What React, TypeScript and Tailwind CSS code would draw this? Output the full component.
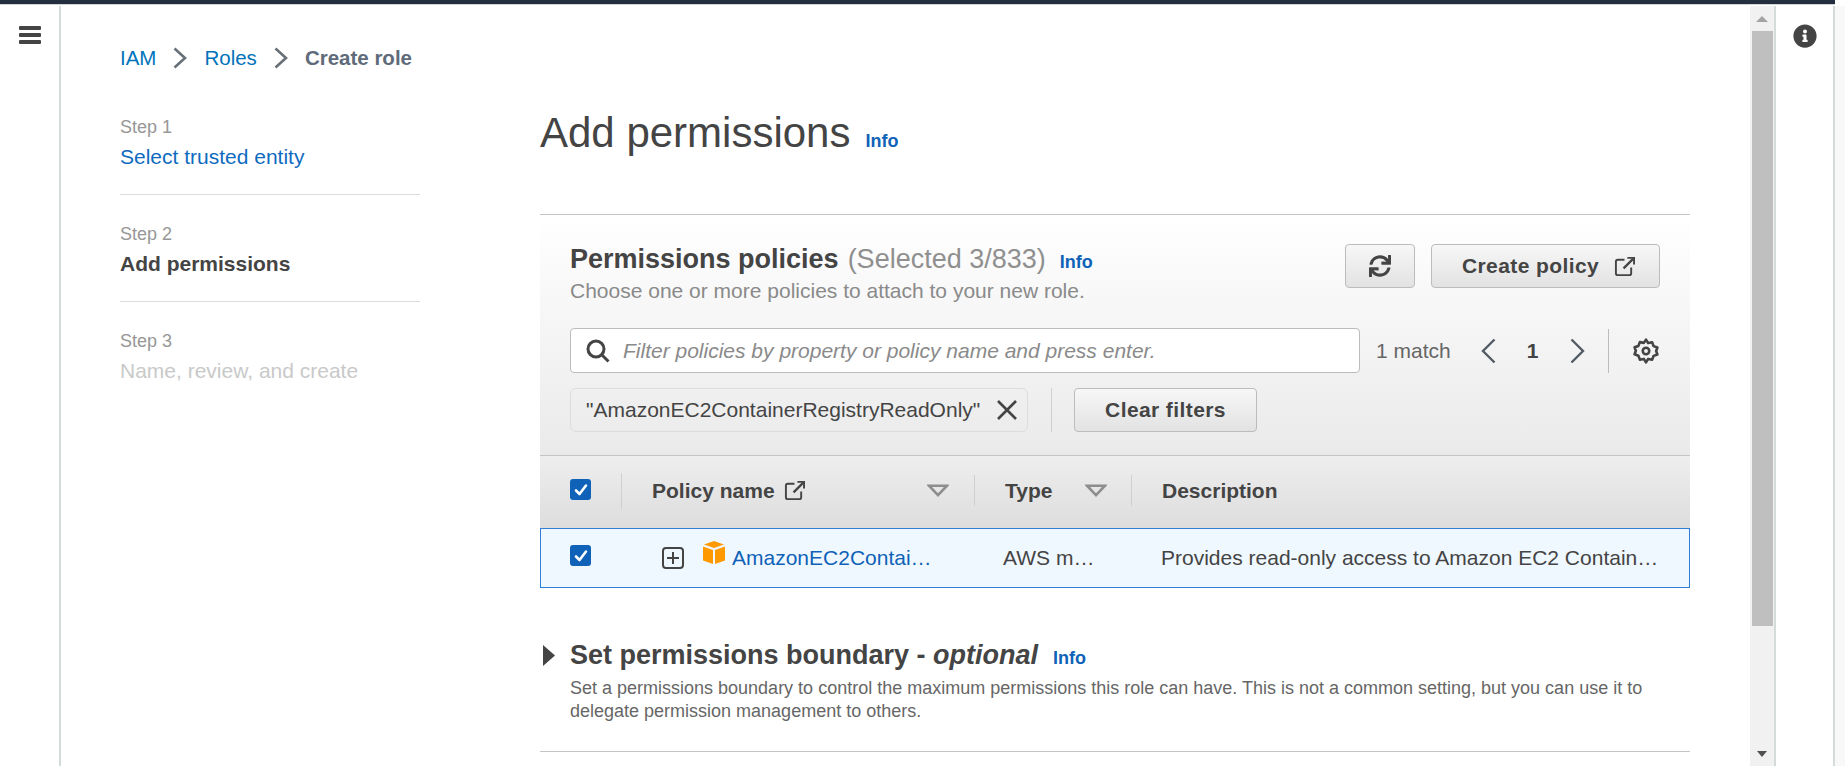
import { FaInfoCircle, FaSync } from "react-icons/fa";

const font = "font-['Liberation_Sans',Arial,sans-serif]";

function ExternalIcon({ className }: { className?: string }) {
  return (
    <svg viewBox="0 0 22 22" fill="none" stroke="currentColor" strokeWidth="2" className={className}>
      <path d="M11 4H4a2 2 0 0 0-2 2v12a2 2 0 0 0 2 2h12a2 2 0 0 0 2-2v-6" />
      <path d="M10 13 20 3" strokeWidth="2.4" />
      <path d="M14 2h7v7" />
    </svg>
  );
}

function Check({ className }: { className?: string }) {
  return (
    <span className={`flex h-[21px] w-[21px] shrink-0 items-center justify-center rounded-[3px] bg-[#0f62b8] ${className ?? ""}`}>
      <svg viewBox="0 0 16 16" className="h-[16px] w-[16px]" fill="none" stroke="#fff" strokeWidth="2.6" strokeLinecap="round" strokeLinejoin="round">
        <path d="M3 8.5 6.5 12 13 3.5" />
      </svg>
    </span>
  );
}

function SortCaret() {
  return (
    <svg viewBox="0 0 22 12" className="h-[13px] w-[22px]">
      <path d="M2 1.2h18L11 10.6z" fill="none" stroke="#8d8d8d" strokeWidth="2.6" />
    </svg>
  );
}

function Info({ className }: { className?: string }) {
  return <span className={`text-[18px] font-bold text-[#0f62b8] ${className ?? ""}`}>Info</span>;
}

function Chevron({ dir }: { dir: "left" | "right" }) {
  return (
    <svg viewBox="0 0 15 26" className="h-[26px] w-[15px]" fill="none" stroke="#545b64" strokeWidth="2.4">
      <path d={dir === "left" ? "M13.5 1.5 2 13l11.5 11.5" : "M1.5 1.5 13 13 1.5 24.5"} />
    </svg>
  );
}

function BreadcrumbSep() {
  return (
    <svg viewBox="0 0 14 22" className="h-[22px] w-[14px]" fill="none" stroke="#687078" strokeWidth="2.6">
      <path d="M1.5 1.5 12 11 1.5 20.5" />
    </svg>
  );
}

function Btn({ children, className }: { children: React.ReactNode; className?: string }) {
  return (
    <div className={`flex h-[44px] items-center justify-center rounded-[4px] border border-[#bcbcbc] bg-linear-to-b from-[#f7f7f7] to-[#e2e2e2] text-[#444] ${className ?? ""}`}>
      {children}
    </div>
  );
}

function Step({ label, name, nameClass, border }: { label: string; name: string; nameClass: string; border?: boolean }) {
  return (
    <div className={`h-[107px] pt-[27px] ${border ? "border-b border-[#dcdcdc]" : ""}`}>
      <div className="text-[18px] leading-[24px] text-[#979797]">{label}</div>
      <div className={`mt-[3px] text-[21px] leading-[30px] ${nameClass}`}>{name}</div>
    </div>
  );
}

function Table() {
  return (
    <>
      <div className="flex h-[73px] items-center border-t border-[#c4c4c4] bg-linear-to-b from-[#eeeeee] to-[#dddddd] pb-[3px] text-[21px] font-bold text-[#444]">
        <div className="flex w-[81px] items-center pl-[30px]">
          <Check className="-mt-[2px]" />
          <span className="ml-[30px] h-[36px] border-l border-[#cfcfcf]" />
        </div>
        <div className="flex w-[354px] items-center justify-between border-r border-[#cfcfcf] pl-[31px] pr-[25px]">
          <div className="flex items-center gap-[9px]">
            <span>Policy name</span>
            <ExternalIcon className="h-[21px] w-[21px]" />
          </div>
          <SortCaret />
        </div>
        <div className="flex w-[157px] items-center justify-between border-r border-[#cfcfcf] pl-[30px] pr-[24px]">
          <span>Type</span>
          <SortCaret />
        </div>
        <div className="pl-[30px]">Description</div>
      </div>
      <div className="flex h-[60px] items-center border border-[#2f80d4] bg-[#f0f8ff] text-[21px] text-[#444]">
        <div className="w-[80px] pb-[5px] pl-[29px]">
          <Check />
        </div>
        <div className="flex w-[353px] items-center pl-[41px]">
          <svg viewBox="0 0 22 22" className="h-[22px] w-[22px] shrink-0" fill="none" stroke="#444" strokeWidth="2">
            <rect x="1" y="1" width="20" height="20" rx="3" />
            <path d="M11 5v12M5 11h12" />
          </svg>
          <svg viewBox="0 0 22 24" className="ml-[19px] mb-[10px] h-[24px] w-[22px] shrink-0" fill="#ff9900">
            <path d="M11 0 21 3.6 11 7 1 3.6z" />
            <path d="M0 5.5 10 9v14L0 19.6zM22 5.5 12 9v14l10-3.4z" />
          </svg>
          <span className="ml-[7px] w-[200px] truncate text-[#0f62b8]">AmazonEC2ContainerRegistryReadOnly</span>
        </div>
        <div className="w-[157px] pl-[29px] pr-[35px]">
          <div className="truncate">AWS managed</div>
        </div>
        <div className="w-[530px] truncate pl-[30px]">Provides read-only access to Amazon EC2 Container Registry repositories.</div>
      </div>
    </>
  );
}

export default function App() {
  return (
    <div className={`flex h-[766px] w-[1845px] flex-col overflow-hidden bg-white ${font}`}>
      <div className="flex h-[6px] shrink-0">
        <div className="h-[5px] w-[1835px] border-b border-[#cfd3d6] bg-[#232f3e]" />
      </div>
      <div className="flex min-h-0 flex-1">
        <div className="w-[61px] shrink-0 border-r-2 border-[#d5dbdb] pl-[19px] pt-[20px]">
          <svg viewBox="0 0 22 18" className="h-[18px] w-[22px]" fill="#444">
            <rect width="22" height="4" rx="1" />
            <rect y="7" width="22" height="4" rx="1" />
            <rect y="14" width="22" height="4" rx="1" />
          </svg>
        </div>

        <div className="w-[1689px] shrink-0 overflow-hidden pl-[59px] pr-[60px]">
          <div className="mt-[36px] flex h-[32px] items-center text-[20.5px] leading-[30px]">
            <span className="text-[#0073bb]">IAM</span>
            <span className="mx-[17px]"><BreadcrumbSep /></span>
            <span className="text-[#0073bb]">Roles</span>
            <span className="mx-[17px]"><BreadcrumbSep /></span>
            <span className="font-bold text-[#5f6b7a]">Create role</span>
          </div>

          <div className="mt-[5px] flex">
            <div className="w-[300px] shrink-0 pt-[9px]">
              <Step label="Step 1" name="Select trusted entity" nameClass="text-[#0f6bc0]" border />
              <Step label="Step 2" name="Add permissions" nameClass="font-bold text-[#444]" border />
              <Step label="Step 3" name="Name, review, and create" nameClass="text-[#c9c9c9]" />
            </div>

            <div className="ml-[120px] w-[1150px] shrink-0">
              <div className="mt-[28px] flex h-[52px] items-center">
                <h1 className="text-[42px] leading-[52px] text-[#444]">Add permissions</h1>
                <Info className="ml-[15px] mt-[17px]" />
              </div>

              <div className="mt-[55px] border-t border-[#c4c4c4]">
                <div className="bg-linear-to-b from-[#ffffff] to-[#eaeaea] px-[30px]">
                  <div className="flex h-[113px] justify-between pt-[29px]">
                    <div>
                      <div className="flex items-baseline text-[27px] leading-[30px]">
                        <span className="font-bold text-[#444]">Permissions policies</span>
                        <span className="ml-[9px] text-[#8f8f8f]">(Selected 3/833)</span>
                        <Info className="ml-[14px]" />
                      </div>
                      <div className="mt-[1px] text-[21px] leading-[26px] text-[#8a8a8a]">Choose one or more policies to attach to your new role.</div>
                    </div>
                    <div className="flex gap-[16px]">
                      <Btn className="w-[70px]">
                        <FaSync className="h-[22px] w-[22px]" />
                      </Btn>
                      <Btn className="w-[229px] gap-[15px] pl-[6px] text-[21px] font-bold tracking-[0.4px]">
                        <span>Create policy</span>
                        <ExternalIcon className="h-[21px] w-[21px]" />
                      </Btn>
                    </div>
                  </div>

                  <div className="flex h-[45px] items-center">
                    <div className="flex h-[45px] w-[790px] items-center rounded-[4px] border border-[#bcbcbc] bg-white pl-[15px]">
                      <svg viewBox="0 0 24 24" className="h-[24px] w-[24px]" fill="none" stroke="#444" strokeWidth="3">
                        <circle cx="10" cy="10" r="8" />
                        <path d="m15.5 15.5 7 7" />
                      </svg>
                      <span className="ml-[13px] text-[21px] italic text-[#8a8a8a]">Filter policies by property or policy name and press enter.</span>
                    </div>
                    <span className="ml-[16px] text-[21px] text-[#666]">1 match</span>
                    <span className="ml-[30px] flex"><Chevron dir="left" /></span>
                    <span className="ml-[31px] w-[12px] text-[21px] font-bold text-[#444]">1</span>
                    <span className="ml-[31px] flex"><Chevron dir="right" /></span>
                    <span className="ml-[23px] h-[44px] border-l border-[#bcbcbc]" />
                    <svg viewBox="0 0 24 24" className="ml-[24px] h-[26px] w-[26px]" fill="none" stroke="#444" strokeWidth="2.4" strokeLinejoin="round">
                      <circle cx="12" cy="12" r="3" />
                      <path d="M12 1.5 14 4.7l3.7-.7 1.3 3.5 3.5 1.3-1.1 3.2 1.1 3.2-3.5 1.3-1.3 3.5-3.7-.7-2 3.2-2-3.2-3.7.7L5 16.3 1.5 15 2.6 11.8 1.5 8.6 5 7.3 6.3 3.8l3.7.7z" />
                    </svg>
                  </div>

                  <div className="mt-[15px] flex h-[44px] items-center">
                    <div className="flex h-[44px] w-[458px] items-center justify-between rounded-[6px] border border-[#dcdcdc] pl-[15px] pr-[10px] text-[21px] text-[#444]">
                      <span>"AmazonEC2ContainerRegistryReadOnly"</span>
                      <svg viewBox="0 0 20 20" className="h-[20px] w-[20px]" stroke="#444" strokeWidth="2.6">
                        <path d="m1 1 18 18M19 1 1 19" />
                      </svg>
                    </div>
                    <span className="ml-[23px] h-[44px] border-l border-[#cfcfcf]" />
                    <Btn className="ml-[22px] w-[183px] text-[21px] font-bold tracking-[0.4px]">Clear filters</Btn>
                  </div>
                  <div className="h-[23px]" />
                </div>

                <Table />
              </div>

              <div className="mt-[51px] flex h-[33px] items-center">
                <svg viewBox="0 0 12 21" className="ml-[3px] h-[21px] w-[12px]" fill="#444">
                  <path d="M0 0 12 10.5 0 21z" />
                </svg>
                <div className="ml-[15px] flex items-baseline text-[27px] font-bold text-[#444]">
                  <span>Set permissions boundary - <em>optional</em></span>
                  <Info className="ml-[15px]" />
                </div>
              </div>
              <div className="ml-[30px] mt-[5px] w-[1090px] text-[18px] leading-[23px] text-[#666]">
                Set a permissions boundary to control the maximum permissions this role can have. This is not a common setting, but you can use it to delegate permission management to others.
              </div>
              <div className="mt-[28px] border-t border-[#c4c4c4]" />
            </div>
          </div>
        </div>

        {/* scrollbar */}
        <div className="flex w-[24px] shrink-0 flex-col bg-[#f1f1f1]">
          <div className="flex h-[25px] items-center justify-center">
            <span className="h-0 w-0 border-x-[6px] border-b-[6px] border-x-transparent border-b-[#a3a3a3]" />
          </div>
          <div className="ml-[2px] h-[595px] w-[21px] bg-[#bfbfbf]" />
          <div className="flex flex-1 items-end justify-center pb-[9px]">
            <span className="h-0 w-0 border-x-[5px] border-t-[6px] border-x-transparent border-t-[#505050]" />
          </div>
        </div>

        <div className="flex w-[61px] shrink-0 justify-center border-x-2 border-[#d5dbdb] pl-[1px] pt-[18px]">
          <FaInfoCircle className="h-[24px] w-[24px] text-[#444]" />
        </div>
        <div className="w-[10px] shrink-0 bg-[#f8f8f8]" />
      </div>
    </div>
  );
}
